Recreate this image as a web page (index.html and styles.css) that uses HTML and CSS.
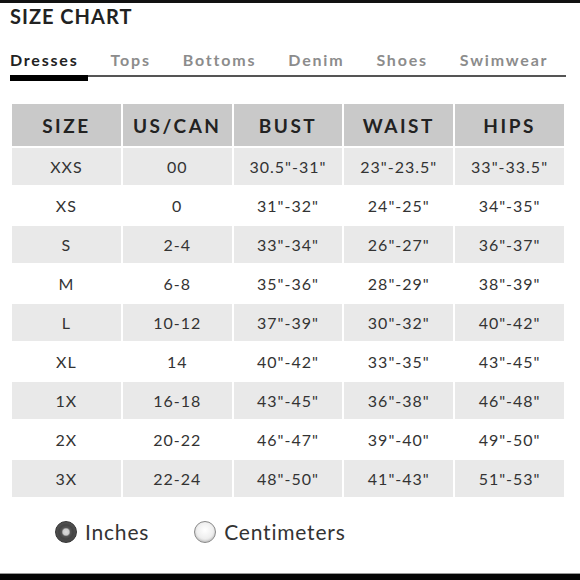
FILE: index.html
```html
<!DOCTYPE html>
<html>
<head>
<meta charset="utf-8">
<link rel="stylesheet" href="styles.css">
</head>
<body>
<div class="page">
  <h1 class="title">SIZE CHART</h1>
  <nav class="tabs">
    <span class="tab active">Dresses</span>
    <span class="tab">Tops</span>
    <span class="tab">Bottoms</span>
    <span class="tab">Denim</span>
    <span class="tab">Shoes</span>
    <span class="tab">Swimwear</span>
  </nav>
  <table class="chart">
    <thead>
      <tr><th>SIZE</th><th>US/CAN</th><th>BUST</th><th>WAIST</th><th>HIPS</th></tr>
    </thead>
    <tbody>
      <tr class="shade"><td>XXS</td><td>00</td><td>30.5"-31"</td><td>23"-23.5"</td><td>33"-33.5"</td></tr>
      <tr><td>XS</td><td>0</td><td>31"-32"</td><td>24"-25"</td><td>34"-35"</td></tr>
      <tr class="shade"><td>S</td><td>2-4</td><td>33"-34"</td><td>26"-27"</td><td>36"-37"</td></tr>
      <tr><td>M</td><td>6-8</td><td>35"-36"</td><td>28"-29"</td><td>38"-39"</td></tr>
      <tr class="shade"><td>L</td><td>10-12</td><td>37"-39"</td><td>30"-32"</td><td>40"-42"</td></tr>
      <tr><td>XL</td><td>14</td><td>40"-42"</td><td>33"-35"</td><td>43"-45"</td></tr>
      <tr class="shade"><td>1X</td><td>16-18</td><td>43"-45"</td><td>36"-38"</td><td>46"-48"</td></tr>
      <tr><td>2X</td><td>20-22</td><td>46"-47"</td><td>39"-40"</td><td>49"-50"</td></tr>
      <tr class="shade"><td>3X</td><td>22-24</td><td>48"-50"</td><td>41"-43"</td><td>51"-53"</td></tr>
    </tbody>
  </table>
  <div class="units">
    <label class="unit"><span class="radio checked"></span>Inches</label>
    <label class="unit"><span class="radio"></span>Centimeters</label>
  </div>
</div>
<div class="bottom-bar"></div>
</body>
</html>
```
FILE: styles.css
```css
html, body {
  margin: 0;
  padding: 0;
  background: #fff;
}
body {
  width: 580px;
  height: 580px;
  overflow: hidden;
  position: relative;
  font-family: "Lato", "Open Sans", sans-serif;
  color: #333;
}
.page {
  border-top: 3px solid #111;
  height: 570px;
  box-sizing: border-box;
}
.title {
  margin: 0;
  padding: 1px 0 0 10px;
  font-size: 20px;
  line-height: 24px;
  font-weight: 700;
  color: #222;
  letter-spacing: 1px;
}
.tabs {
  display: flex;
  gap: 32px;
  margin: 22px 14px 0 10px;
  border-bottom: 2px solid #555;
  height: 25px;
  position: relative;
}
.tab {
  font-size: 16px;
  line-height: 20px;
  font-weight: 700;
  letter-spacing: 1.8px;
  color: #8c8c8c;
}
.tab.active {
  color: #222;
  position: relative;
}
.tab.active::after {
  content: "";
  position: absolute;
  left: 0;
  right: -9px;
  bottom: -6px;
  height: 6px;
  background: #000;
}
.chart {
  margin: 25px 0 0 10px;
  width: 556px;
  table-layout: fixed;
  border-collapse: separate;
  border-spacing: 2px;
}
.chart th {
  background: #c9c9c9;
  height: 42px;
  padding: 0;
  font-size: 19px;
  font-weight: 700;
  letter-spacing: 2.5px;
  color: #222;
  text-align: center;
}
.chart td {
  height: 37px;
  padding: 0;
  font-size: 16px;
  letter-spacing: 1px;
  color: #333;
  text-align: center;
}
.chart tr.shade td {
  background: #e9e9e9;
}
.units {
  display: flex;
  align-items: center;
  margin: 20px 0 0 55px;
  gap: 45px;
}
.unit {
  display: flex;
  align-items: center;
  font-size: 21px;
  color: #333;
  letter-spacing: 0.8px;
}
.radio {
  width: 22px;
  height: 22px;
  border-radius: 50%;
  box-sizing: border-box;
  border: 1px solid #888;
  background: radial-gradient(circle at 50% 40%, #fff 0%, #eee 55%, #d0d0d0 100%);
  margin-right: 8px;
  box-shadow: inset 0 -1px 2px rgba(0,0,0,0.15);
}
.radio.checked {
  border: 1px solid #333;
  background: radial-gradient(circle at 50% 50%, #ddd 0, #ccc 3px, #555 4.5px, #444 7px, #5a5a5a 11px);
}
.bottom-bar {
  position: absolute;
  left: 0;
  right: 0;
  bottom: 0;
  height: 6px;
  background: #050505;
  border-top: 1px solid #999;
}
```
